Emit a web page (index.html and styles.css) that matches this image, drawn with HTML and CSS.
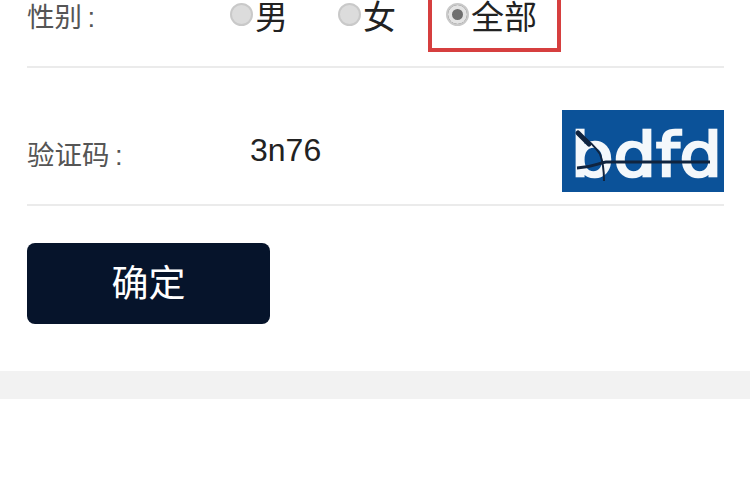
FILE: index.html
```html
<!DOCTYPE html>
<html>
	<head>
		<meta charset="utf-8">
		<title>验证码</title>
		<link rel="stylesheet" href="styles.css">
	</head>
	<body>
		<form class="form">
			<div class="row row-gender">
				<span class="label">性别&thinsp;:</span>
				<div class="options">
					<label class="option"><i class="radio"></i>男</label>
					<label class="option"><i class="radio"></i>女</label>
					<label class="option option-all"><i class="radio checked"></i>全部</label>
				</div>
			</div>
			<div class="row row-code">
				<span class="label label-code">验证码&thinsp;:</span>
				<span class="code">3n76</span>
				<svg class="captcha" width="162" height="82" viewBox="0 0 162 82">
					<rect width="162" height="82" fill="#0b5299"/>
					<g class="captcha-text">
						<text x="9" y="66" textLength="151" lengthAdjust="spacingAndGlyphs">bdfd</text>
					</g>
					<path d="M18 25 C28 31 34 38 38 44 C41 52 42 62 42 71" fill="none" stroke="#10243f" stroke-width="2"/>
					<path d="M16 23 L27 34" fill="none" stroke="#10243f" stroke-width="5" stroke-linecap="round"/>
					<path d="M15 58 C32 57 36 53 44 52 L148 52" fill="none" stroke="#10243f" stroke-width="3"/>
				</svg>
			</div>
			<button class="submit" type="button">确定</button>
		</form>
		<div class="band"></div>
	</body>
</html>
```

FILE: styles.css
```css
*{
	margin:0;
	padding:0;
	box-sizing:border-box;
}
html,body{
	height:100%;
	overflow:hidden;
}
body{
	background-color:#fff;
	font-family:"Liberation Sans","Noto Sans CJK SC",sans-serif;
	color:#222;
}
.form{
	padding:0 26px 47px 27px;
}
.row{
	display:flex;
	border-bottom:2px solid #ebebeb;
}
.row-gender{
	height:68px;
}
.row-code{
	height:138px;
	padding-top:42px;
	align-items:flex-start;
}
.label{
	width:203px;
	flex-shrink:0;
	font-size:27.5px;
	line-height:36px;
	color:#555;
}
.label-code{
	margin-top:28px;
}
.options{
	display:flex;
	align-items:flex-start;
	gap:50px;
}
.option{
	display:flex;
	align-items:flex-start;
	font-size:33px;
	line-height:36px;
	color:#222;
}
.option-all{
	height:62px;
	margin-top:-10px;
	margin-left:-18px;
	padding:10px 20px 0 14px;
	border:4px solid #d63f3f;
	border-top-width:0;
}
.radio{
	width:23px;
	height:23px;
	margin:3px 2px 0 0;
	border:2px solid #c9c9c9;
	border-radius:50%;
	background-color:#dcdcdc;
	flex-shrink:0;
}
.radio.checked{
	background-color:#6e6e6e;
	box-shadow:inset 0 0 0 4px #e4e4e4;
}
.code{
	width:312px;
	flex-shrink:0;
	margin-left:20px;
	font-size:32px;
	line-height:37px;
	margin-top:22px;
	color:#222;
}
.captcha{
	display:block;
	margin-left:auto;
	flex-shrink:0;
}
.captcha-text{
	font-family:"DejaVu Sans",sans-serif;
	font-size:60px;
	fill:#f4f8fb;
	stroke:#f4f8fb;
	stroke-width:2.5px;
	filter:blur(.7px);
}
.submit{
	display:block;
	width:243px;
	height:81px;
	margin-top:37px;
	padding-bottom:6px;
	border:none;
	border-radius:8px;
	background-color:#06142b;
	color:#fff;
	font-family:"Noto Sans CJK SC",sans-serif;
	font-size:37px;
}
.band{
	height:28px;
	background-color:#f2f2f2;
}
```
